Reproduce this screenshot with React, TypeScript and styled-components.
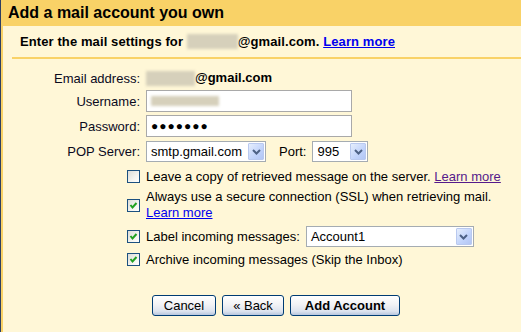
import styled, { createGlobalStyle } from 'styled-components';

const GlobalStyle = createGlobalStyle`
  html, body {
    margin: 0;
    padding: 0;
    background: #fff7d7;
  }
  body {
    font-family: 'Liberation Sans', Arial, sans-serif;
    font-size: 13px;
    color: #000;
  }
`;

const Frame = styled.div`
  width: 521px;
  height: 332px;
  border-left: 1px solid #2f3f61;
  box-sizing: border-box;
  background: #fff7d7;
  overflow: hidden;
`;

const Header = styled.div`
  height: 26px;
  background: #f9d267;
  padding-left: 7px;
  display: flex;
  align-items: center;
  font-size: 16px;
  font-weight: bold;
  color: #000;
`;

const Body = styled.div`
  border-left: 2px solid #f9d267;
  height: 306px;
  display: flex;
  flex-direction: column;
`;

const SubHeader = styled.div`
  height: 31px;
  padding-left: 17px;
  display: flex;
  align-items: center;
  font-weight: bold;
  font-size: 13px;
  letter-spacing: 0.1px;
`;

const Divider = styled.div`
  height: 2px;
  margin-left: 9px;
  background: #f9d267;
`;

const Blur = styled.span<{ $w: number; $h?: number }>`
  display: inline-block;
  width: ${({ $w }) => $w}px;
  height: ${({ $h }) => $h ?? 14}px;
  vertical-align: middle;
  background: #d6d0bb;
  filter: blur(1.5px);
`;

const Link = styled.a<{ $visited?: boolean }>`
  color: ${({ $visited }) => ($visited ? '#551a8b' : '#0000ee')};
  text-decoration: underline;
  cursor: pointer;
`;

const Row = styled.div<{ $h: number; $mt: number }>`
  display: grid;
  grid-template-columns: 137px 1fr;
  column-gap: 6px;
  height: ${({ $h }) => $h}px;
  margin-top: ${({ $mt }) => $mt}px;
  align-items: center;
`;

const Label = styled.div`
  text-align: right;
  color: #0a0a1e;
  white-space: nowrap;
`;

const Value = styled.div`
  display: flex;
  align-items: center;
  gap: 6px;
  white-space: nowrap;
`;

const Strong = styled.span`
  font-weight: bold;
`;

const TextField = styled.div`
  width: 206px;
  height: 22px;
  box-sizing: border-box;
  border: 1px solid #a9a9a9;
  background: #fff;
  display: flex;
  align-items: center;
  padding-left: 4px;
  font-size: 12px;
  letter-spacing: 1px;
`;

const Select = styled.div<{ $w: number }>`
  width: ${({ $w }) => $w}px;
  height: 21px;
  box-sizing: border-box;
  border: 1px solid #a5acb2;
  background: #fff;
  display: flex;
  align-items: stretch;
  padding: 1px;
`;

const SelectText = styled.div`
  flex: 1;
  padding-left: 3px;
  display: flex;
  align-items: center;
  font-size: 13px;
`;

const Arrow = styled.div`
  width: 16px;
  box-sizing: border-box;
  border: 1px solid #b9c9ef;
  border-radius: 1px;
  background: linear-gradient(135deg, #e6eefc 0%, #c1d3fb 60%, #b3c6f4 100%);
  display: flex;
  align-items: center;
  justify-content: center;
`;

const CheckCell = styled.div`
  display: flex;
  justify-content: flex-end;
  align-items: center;
`;

const Box = styled.div`
  width: 13px;
  height: 13px;
  box-sizing: border-box;
  border: 1px solid #1c5180;
  background: linear-gradient(135deg, #dcdcd7 0%, #f4f4f0 60%, #ffffff 100%);
  display: flex;
  align-items: center;
  justify-content: center;
`;

const TwoLine = styled.div`
  line-height: 16px;
  white-space: nowrap;
`;

const Buttons = styled.div`
  display: flex;
  gap: 6px;
  padding-left: 6px;
`;

const Button = styled.button<{ $primary?: boolean; $w: number }>`
  width: ${({ $w }) => $w}px;
  height: 21px;
  box-sizing: border-box;
  border: 1px solid #003c74;
  border-radius: 3px;
  background: linear-gradient(to bottom, #ffffff 0%, #f2f2f5 45%, #dde3ee 80%, #b8c6dd 100%);
  font-family: 'Liberation Sans', Arial, sans-serif;
  font-size: 13px;
  font-weight: ${({ $primary }) => ($primary ? 'bold' : 'normal')};
  color: #000;
  padding: 0;
  cursor: pointer;
`;

function Chevron() {
  return (
    <svg width="9" height="6" viewBox="0 0 9 6">
      <path d="M1 1 L4.5 4.5 L8 1" fill="none" stroke="#4d6185" strokeWidth="2" />
    </svg>
  );
}

function SelectBox({ w, value }: { w: number; value: string }) {
  return (
    <Select $w={w}>
      <SelectText>{value}</SelectText>
      <Arrow>
        <Chevron />
      </Arrow>
    </Select>
  );
}

function Checkbox({ checked }: { checked: boolean }) {
  return (
    <Box>
      {checked && (
        <svg width="9" height="9" viewBox="0 0 9 9">
          <path d="M1.5 4 L3.5 6.5 L7.5 2" fill="none" stroke="#21a121" strokeWidth="2" />
        </svg>
      )}
    </Box>
  );
}

export default function App() {
  return (
    <>
      <GlobalStyle />
      <Frame>
        <Header>Add a mail account you own</Header>
        <Body>
          <SubHeader>
            Enter the mail settings for&nbsp;
            <Blur $w={51} $h={15} />
            @gmail.com.&nbsp;<Link>Learn more</Link>
          </SubHeader>
          <Divider />

          <Row $h={18} $mt={10}>
            <Label>Email address:</Label>
            <Value>
              <span>
                <Blur $w={49} $h={15} />
                <Strong>@gmail.com</Strong>
              </span>
            </Value>
          </Row>
          <Row $h={22} $mt={3}>
            <Label>Username:</Label>
            <TextField>
              <Blur $w={68} $h={10} />
            </TextField>
          </Row>
          <Row $h={22} $mt={3}>
            <Label>Password:</Label>
            <TextField>●●●●●●●</TextField>
          </Row>
          <Row $h={21} $mt={4}>
            <Label>POP Server:</Label>
            <Value>
              <SelectBox w={120} value="smtp.gmail.com" />
              <span style={{ marginLeft: 7 }}>Port:</span>
              <SelectBox w={56} value="995" />
            </Value>
          </Row>

          <Row $h={16} $mt={6}>
            <CheckCell>
              <Checkbox checked={false} />
            </CheckCell>
            <Value>
              <span>
                Leave a copy of retrieved message on the server. <Link $visited>Learn more</Link>
              </span>
            </Value>
          </Row>
          <Row $h={32} $mt={5}>
            <CheckCell>
              <Checkbox checked />
            </CheckCell>
            <TwoLine>
              Always use a secure connection (SSL) when retrieving mail.
              <br />
              <Link>Learn more</Link>
            </TwoLine>
          </Row>
          <Row $h={20} $mt={5}>
            <CheckCell>
              <Checkbox checked />
            </CheckCell>
            <Value>
              <span>Label incoming messages:</span>
              <SelectBox w={168} value="Account1" />
            </Value>
          </Row>
          <Row $h={16} $mt={5}>
            <CheckCell>
              <Checkbox checked />
            </CheckCell>
            <Value>Archive incoming messages (Skip the Inbox)</Value>
          </Row>

          <Row $h={21} $mt={28}>
            <div />
            <Buttons>
              <Button $w={64}>Cancel</Button>
              <Button $w={62}>« Back</Button>
              <Button $w={110} $primary>
                Add Account
              </Button>
            </Buttons>
          </Row>
        </Body>
      </Frame>
    </>
  );
}
